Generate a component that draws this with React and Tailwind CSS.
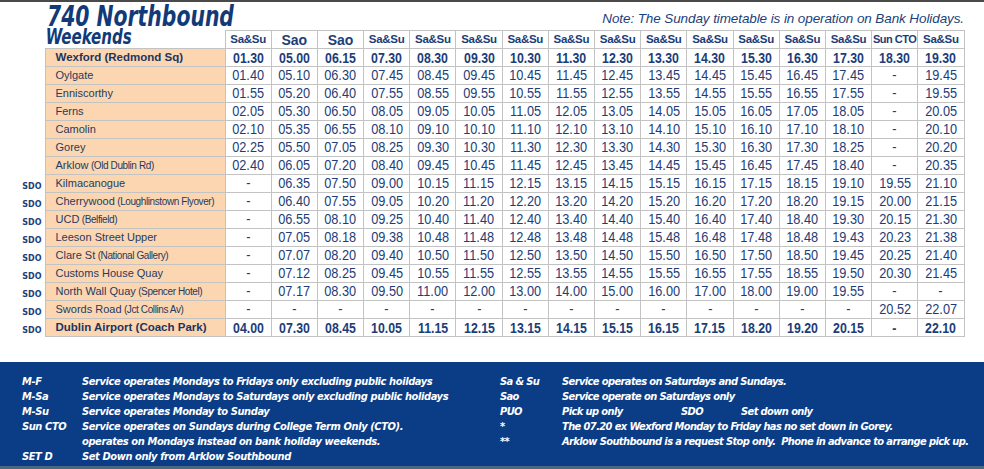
import React from "react";

const heads = [
  "Sa&Su", "Sao", "Sao", "Sa&Su", "Sa&Su", "Sa&Su", "Sa&Su", "Sa&Su", "Sa&Su",
  "Sa&Su", "Sa&Su", "Sa&Su", "Sa&Su", "Sa&Su", "Sun CTO", "Sa&Su",
];

const rows = [
  { name: "Wexford (Redmond Sq)", bold: true, t: "01.30 05.00 06.15 07.30 08.30 09.30 10.30 11.30 12.30 13.30 14.30 15.30 16.30 17.30 18.30 19.30" },
  { name: "Oylgate", t: "01.40 05.10 06.30 07.45 08.45 09.45 10.45 11.45 12.45 13.45 14.45 15.45 16.45 17.45 - 19.45" },
  { name: "Enniscorthy", t: "01.55 05.20 06.40 07.55 08.55 09.55 10.55 11.55 12.55 13.55 14.55 15.55 16.55 17.55 - 19.55" },
  { name: "Ferns", t: "02.05 05.30 06.50 08.05 09.05 10.05 11.05 12.05 13.05 14.05 15.05 16.05 17.05 18.05 - 20.05" },
  { name: "Camolin", t: "02.10 05.35 06.55 08.10 09.10 10.10 11.10 12.10 13.10 14.10 15.10 16.10 17.10 18.10 - 20.10" },
  { name: "Gorey", t: "02.25 05.50 07.05 08.25 09.30 10.30 11.30 12.30 13.30 14.30 15.30 16.30 17.30 18.25 - 20.20" },
  { name: "Arklow", sub: "(Old Dublin Rd)", t: "02.40 06.05 07.20 08.40 09.45 10.45 11.45 12.45 13.45 14.45 15.45 16.45 17.45 18.40 - 20.35" },
  { name: "Kilmacanogue", sdo: true, t: "- 06.35 07.50 09.00 10.15 11.15 12.15 13.15 14.15 15.15 16.15 17.15 18.15 19.10 19.55 21.10" },
  { name: "Cherrywood", sub: "(Loughlinstown Flyover)", sdo: true, t: "- 06.40 07.55 09.05 10.20 11.20 12.20 13.20 14.20 15.20 16.20 17.20 18.20 19.15 20.00 21.15" },
  { name: "UCD", sub: "(Belfield)", sdo: true, t: "- 06.55 08.10 09.25 10.40 11.40 12.40 13.40 14.40 15.40 16.40 17.40 18.40 19.30 20.15 21.30" },
  { name: "Leeson Street Upper", sdo: true, t: "- 07.05 08.18 09.38 10.48 11.48 12.48 13.48 14.48 15.48 16.48 17.48 18.48 19.43 20.23 21.38" },
  { name: "Clare St", sub: "(National Gallery)", sdo: true, t: "- 07.07 08.20 09.40 10.50 11.50 12.50 13.50 14.50 15.50 16.50 17.50 18.50 19.45 20.25 21.40" },
  { name: "Customs House Quay", sdo: true, t: "- 07.12 08.25 09.45 10.55 11.55 12.55 13.55 14.55 15.55 16.55 17.55 18.55 19.50 20.30 21.45" },
  { name: "North Wall Quay", sub: "(Spencer Hotel)", sdo: true, t: "- 07.17 08.30 09.50 11.00 12.00 13.00 14.00 15.00 16.00 17.00 18.00 19.00 19.55 - -" },
  { name: "Swords Road", sub: "(Jct Collins Av)", sdo: true, t: "- - - - - - - - - - - - - - 20.52 22.07" },
  { name: "Dublin Airport (Coach Park)", bold: true, sdo: true, t: "04.00 07.30 08.45 10.05 11.15 12.15 13.15 14.15 15.15 16.15 17.15 18.20 19.20 20.15 - 22.10" },
];

const legendLeft = [
  ["M-F", "Service operates Mondays to Fridays only excluding public hoildays"],
  ["M-Sa", "Service operates Mondays to Saturdays only excluding public holidays"],
  ["M-Su", "Service operates Monday to Sunday"],
  ["Sun CTO", "Service operates on Sundays during College Term Only (CTO)."],
  ["", "operates on Mondays instead on bank holiday weekends."],
  ["SET D", "Set Down only from Arklow Southbound"],
];

const legendRight = [
  ["Sa & Su", "Service operates on Saturdays and Sundays."],
  ["Sao", "Service operate on Saturdays only"],
  ["PUO", "Pick up only"],
  ["*", "The 07.20 ex Wexford Monday to Friday has no set down in Gorey."],
  ["**", "Arklow Southbound is a request Stop only.  Phone in advance to arrange pick up."],
];

export default function App() {
  return (
    <div className="w-[984px] h-[469px] bg-white overflow-hidden flex flex-col font-['Liberation_Sans',sans-serif]">
      <div className="h-[2px] bg-[#4a4a4a]" />
      <div className="h-[28px] flex items-start justify-between pl-[47px] pr-[20px]">
        <div className="mt-[1px] text-[29px] leading-[27px] font-bold italic text-[#123a78] font-['DejaVu_Sans_Condensed',sans-serif] origin-left scale-x-[0.78] whitespace-nowrap">
          740 Northbound
        </div>
        <div className="mt-[9px] text-[13.5px] leading-[16px] italic text-[#1e3f7a] tracking-[-0.1px] whitespace-nowrap">
          Note: The Sunday timetable is in operation on Bank Holidays.
        </div>
      </div>

      <table className="table-fixed border-collapse w-[964px] leading-none">
        <colgroup>
          <col className="w-[45px]" />
          <col className="w-[180px]" />
          {heads.map((_, i) => (
            <col key={i} className="w-[46.2px]" />
          ))}
        </colgroup>
        <thead>
          <tr className="h-[18px]">
            <th className="p-0" />
            <th className="p-0 text-left align-top">
              <div className="-mt-[3px] pl-[1px] text-[22px] leading-[18px] h-[18px] font-bold italic text-[#123a78] font-['DejaVu_Sans_Condensed',sans-serif] origin-left scale-x-[0.76] whitespace-nowrap">
                Weekends
              </div>
            </th>
            {heads.map((h, i) => (
              <th
                key={i}
                className={`p-0 border border-[#c3c3c3] text-[#1d3d78] font-bold leading-none whitespace-nowrap ${
                  h === "Sao" ? "text-[14px]" : h === "Sun CTO" ? "text-[11px] tracking-[-0.5px]" : "text-[11.5px] tracking-[-0.3px]"
                }`}
              >
                {h}
              </th>
            ))}
          </tr>
        </thead>
        <tbody>
          {rows.map((r, ri) => (
            <tr key={ri} className="h-[18px]">
              <td className="p-0 pr-[3px] text-right align-middle leading-none">
                {r.sdo && (
                  <span className="text-[8px] leading-none font-bold text-[#1d3d78] font-['DejaVu_Sans',sans-serif]">SDO</span>
                )}
              </td>
              <td className="p-0 pl-[10px] border border-[#c3c3c3] bg-[#fbd6b0] text-[11px] leading-none text-[#263a62] whitespace-nowrap">
                <span className={r.bold ? "font-bold text-[#1d3461] text-[11.5px]" : ""}>{r.name}</span>
                {r.sub && (
                  <span className="text-[10px] tracking-[-0.4px]"> {r.sub}</span>
                )}
              </td>
              {r.t.split(" ").map((v, ci) => (
                <td
                  key={ci}
                  className={`p-0 border border-[#c3c3c3] text-center leading-none text-[#1d3d78] ${
                    r.bold ? "font-bold text-[14px]" : "text-[14.5px]"
                  }`}
                >
                  <span className="inline-block scale-x-[0.88]">{v}</span>
                </td>
              ))}
            </tr>
          ))}
        </tbody>
      </table>

      <div className="mt-[25px] flex-1 bg-[#0b3d87] flex pt-[12px] pl-[22px] text-white text-[11px] leading-none font-bold italic font-['DejaVu_Sans_Condensed',sans-serif]">
        <div className="w-[478px] flex flex-col tracking-[-0.4px]">
          {legendLeft.map(([k, t], i) => (
            <div key={i} className="flex h-[15px] items-center">
              <span className="w-[60px] shrink-0">{k}</span>
              <span className="whitespace-nowrap">{t}</span>
            </div>
          ))}
        </div>
        <div className="flex flex-col tracking-[-0.6px]">
          {legendRight.map(([k, t], i) => (
            <div key={i} className="flex h-[15px] items-center">
              <span className="w-[62px] shrink-0">{k}</span>
              {k === "PUO" ? (
                <span className="flex">
                  <span className="w-[119px]">{t}</span>
                  <span className="w-[60px]">SDO</span>
                  <span>Set down only</span>
                </span>
              ) : (
                <span className="whitespace-pre">{t}</span>
              )}
            </div>
          ))}
        </div>
      </div>
      <div className="h-[3px] bg-[#4f6683]" />
    </div>
  );
}
